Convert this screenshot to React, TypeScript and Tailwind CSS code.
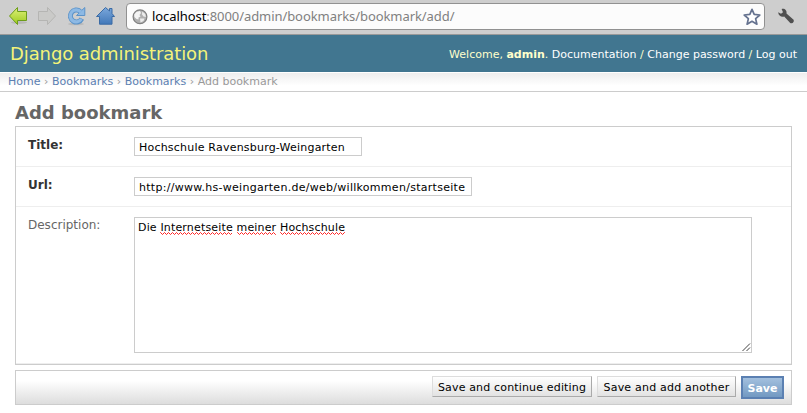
import type { ReactNode } from "react";

function BackIcon() {
  return (
    <svg width="22" height="22" viewBox="0 0 22 22">
      <defs>
        <linearGradient id="back" x1="0" y1="0" x2="0" y2="1">
          <stop offset="0" stopColor="#dff07a" />
          <stop offset="1" stopColor="#9ccb1c" />
        </linearGradient>
      </defs>
      <ellipse cx="12" cy="16.5" rx="8" ry="1.5" fill="#b9b9b9" />
      <path d="M2.5 10 10.5 1.5V5.5H19.5V14.5H10.5V18.5Z" fill="url(#back)" stroke="#6d9c1a" strokeLinejoin="round" />
    </svg>
  );
}

function ForwardIcon() {
  return (
    <svg width="22" height="22" viewBox="0 0 22 22">
      <path d="M19.5 10 11.5 1.5V5.5H2.5V14.5H11.5V18.5Z" fill="#cacac8" stroke="#b5b5b3" strokeLinejoin="round" />
    </svg>
  );
}

function ReloadIcon() {
  return (
    <svg width="22" height="22" viewBox="0 0 22 22">
      <ellipse cx="11" cy="18" rx="8" ry="1.3" fill="#bababa" />
      <path d="M16.8 12.6A6 6 0 1 1 15.2 5.4" fill="none" stroke="#5b93c9" strokeWidth="5" />
      <path d="M11.5 9.5H19.8V1.5Z" fill="#8db9e4" stroke="#5b93c9" strokeLinejoin="round" />
      <path d="M16.4 13A6 6 0 1 1 15.8 5.9" fill="none" stroke="#8db9e4" strokeWidth="3.2" />
    </svg>
  );
}

function HomeIcon() {
  return (
    <svg width="22" height="22" viewBox="0 0 22 22">
      <defs>
        <linearGradient id="home" x1="0" y1="0" x2="0" y2="1">
          <stop offset="0" stopColor="#7aa7db" />
          <stop offset="1" stopColor="#4379b9" />
        </linearGradient>
      </defs>
      <path d="M11.5 1.5 15.5 5V2.5H18V7.5L20.5 10.5H18V18.2H5.5V10.5H2.5Z" fill="url(#home)" stroke="#3b6ba5" strokeLinejoin="round" />
    </svg>
  );
}

function GlobeIcon() {
  return (
    <svg width="16" height="16" viewBox="0 0 16 16">
      <circle cx="8" cy="7.8" r="6.9" fill="#b0b0b0" stroke="#808080" strokeWidth="1.2" />
      <path d="M2.2 5.5 4.5 2.8 8 2 9 4 7.5 6 8.5 7.5 6.5 8.5 6.5 10.5 4.5 10 2.4 8Z" fill="#f4f4f4" />
      <path d="M10.2 2.4 13.3 5 13.9 8 11.5 7.5 10 5.5ZM8 9.5 12.5 9.5 11.5 12 8.5 13.5Z" fill="#ececec" />
    </svg>
  );
}

function StarIcon() {
  return (
    <svg width="18" height="18" viewBox="0 0 18 18">
      <path d="M9 1.3 11.2 6.4 16.8 7 12.6 10.6 13.9 16.2 9 13.3 4.1 16.2 5.4 10.6 1.2 7 6.8 6.4Z" fill="#fff" stroke="#65728f" strokeWidth="1.7" strokeLinejoin="round" />
    </svg>
  );
}

function WrenchIcon() {
  return (
    <svg width="18" height="18" viewBox="0 0 18 18">
      <path d="M4.6 2C7.8 1.2 10 3.6 9.5 6.5L16.6 12.8C17.6 15 15.5 17 13.2 15.9L7.2 9.6C4.2 10.4 1.3 8.6 1.2 5.2L4 6.8 6 5.2Z" fill="#505050" />
    </svg>
  );
}

function Misspelled({ children }: { children: string }) {
  return (
    <span className="relative inline-block">
      {children}
      <svg className="absolute bottom-0 left-0 h-[3px] w-full" shapeRendering="crispEdges">
        <line x1="0" y1="0.5" x2="100%" y2="0.5" stroke="#f55" strokeDasharray="1 3" />
        <line x1="1" y1="1.5" x2="100%" y2="1.5" stroke="#f22" strokeDasharray="1 1" />
        <line x1="2" y1="2.5" x2="100%" y2="2.5" stroke="#f55" strokeDasharray="1 3" />
      </svg>
    </span>
  );
}

function Row({ label, bold, children }: { label: string; bold?: boolean; children: ReactNode }) {
  return (
    <div className="flex border-b border-[#eee] px-3 pt-[10px] pb-[9px]">
      <div className={bold ? "w-[106px] pt-px text-[12px] leading-[15px] font-bold text-[#333]" : "w-[106px] pt-px text-[12px] leading-[15px] text-[#666]"}>
        {label}
      </div>
      {children}
    </div>
  );
}

export default function App() {
  return (
    <div className="h-[413px] w-[807px] overflow-hidden bg-white font-['DejaVu_Sans',sans-serif] text-[11px]">
      <div className="flex h-[35px] border-b border-[#999] bg-[#cecece]">
        <div className="flex w-[126px] gap-[7px] pt-[6px] pl-[7px]">
          <BackIcon />
          <ForwardIcon />
          <ReloadIcon />
          <HomeIcon />
        </div>
        <div className="mt-[3px] flex h-[27px] w-[639px] items-center rounded-[4px] border border-[#919191] bg-[#fcfcfc] pr-[3px] pl-[5px]">
          <GlobeIcon />
          <span className="ml-1 flex-1 pb-px font-['Noto_Sans',sans-serif] text-[13px] leading-[20px] tracking-[-0.07px] text-[#808080]">
            <span className="text-black">localhost</span>:8000/admin/bookmarks/bookmark/add/
          </span>
          <StarIcon />
        </div>
        <div className="pt-[7px] pl-[12px]">
          <WrenchIcon />
        </div>
      </div>

      <div className="flex h-[37px] items-center justify-between bg-[#417690] pr-[10px] pl-[10px] text-[#ffc]">
        <h1 className="text-[18px] leading-[22px] tracking-[-0.09px] text-[#f4f379]">Django administration</h1>
        <div className="pt-[3px] text-[11px] leading-[14px]">
          Welcome, <b>admin</b>. <span className="text-white">Documentation</span> / <span className="text-white">Change password</span> / <span className="text-white">Log out</span>
        </div>
      </div>

      <div className="h-5 border-y border-t-white border-b-[#ccc] bg-linear-to-b from-[#eee] to-white to-70% pl-2 text-[11px] leading-[17px] text-[#999]">
        <span className="text-[#5b80b2]">Home</span> › <span className="text-[#5b80b2]">Bookmarks</span> › <span className="text-[#5b80b2]">Bookmarks</span> › Add bookmark
      </div>

      <div className="pr-[15px] pl-[15px]">
        <h2 className="pt-[10px] text-[18px] leading-[22px] font-bold text-[#666]">Add bookmark</h2>
        <div className="mt-[2px] h-[239px] border border-[#ccc]">
          <Row label="Title:" bold>
            <div className="mb-px h-[19px] w-[228px] border border-[#ccc] pl-1 text-[11px] leading-[19px] tracking-[0.21px] text-black">Hochschule Ravensburg-Weingarten</div>
          </Row>
          <Row label="Url:" bold>
            <div className="mb-px h-[19px] w-[338px] border border-[#ccc] pl-1 text-[11px] leading-[19px] tracking-[0.28px] text-black">http://www.hs-weingarten.de/web/willkommen/startseite</div>
          </Row>
          <Row label="Description:">
            <div className="mb-px flex h-[136px] w-[618px] items-end border border-[#ccc]">
              <div className="flex-1 self-start pt-[2px] pl-[3px] text-[11px] leading-[15px] tracking-[0.16px] text-black">
                Die <Misspelled>Internetseite</Misspelled> <Misspelled>meiner</Misspelled> <Misspelled>Hochschule</Misspelled>
              </div>
              <svg width="9" height="9" viewBox="0 0 9 9">
                <path d="M.5 8 8 .5M4.5 8 8 4.5" stroke="#444" strokeWidth="1" />
              </svg>
            </div>
          </Row>
        </div>
        <div className="mt-[5px] flex h-[35px] items-start justify-end gap-[5px] border border-[#ccc] bg-linear-to-b from-white from-30% to-[#ddd] pt-[5px] pr-[7px] text-black">
          <div className="h-[21px] w-[160px] border border-t-[#ddd] border-r-[#aaa] border-b-[#aaa] border-l-[#ddd] bg-linear-to-b from-white to-[#e2e2e2] text-center text-[11px] leading-[21px] tracking-[0.16px]">Save and continue editing</div>
          <div className="h-[21px] w-[139px] border border-t-[#ddd] border-r-[#aaa] border-b-[#aaa] border-l-[#ddd] bg-linear-to-b from-white to-[#e2e2e2] text-center text-[11px] leading-[21px] tracking-[0.2px]">Save and add another</div>
          <div className="h-[23px] w-[43px] border-2 border-[#5b80b2] bg-linear-to-b from-[#a3c0de] to-[#7299c2] text-center text-[11px] leading-[21px] font-bold text-white">Save</div>
        </div>
      </div>
    </div>
  );
}
